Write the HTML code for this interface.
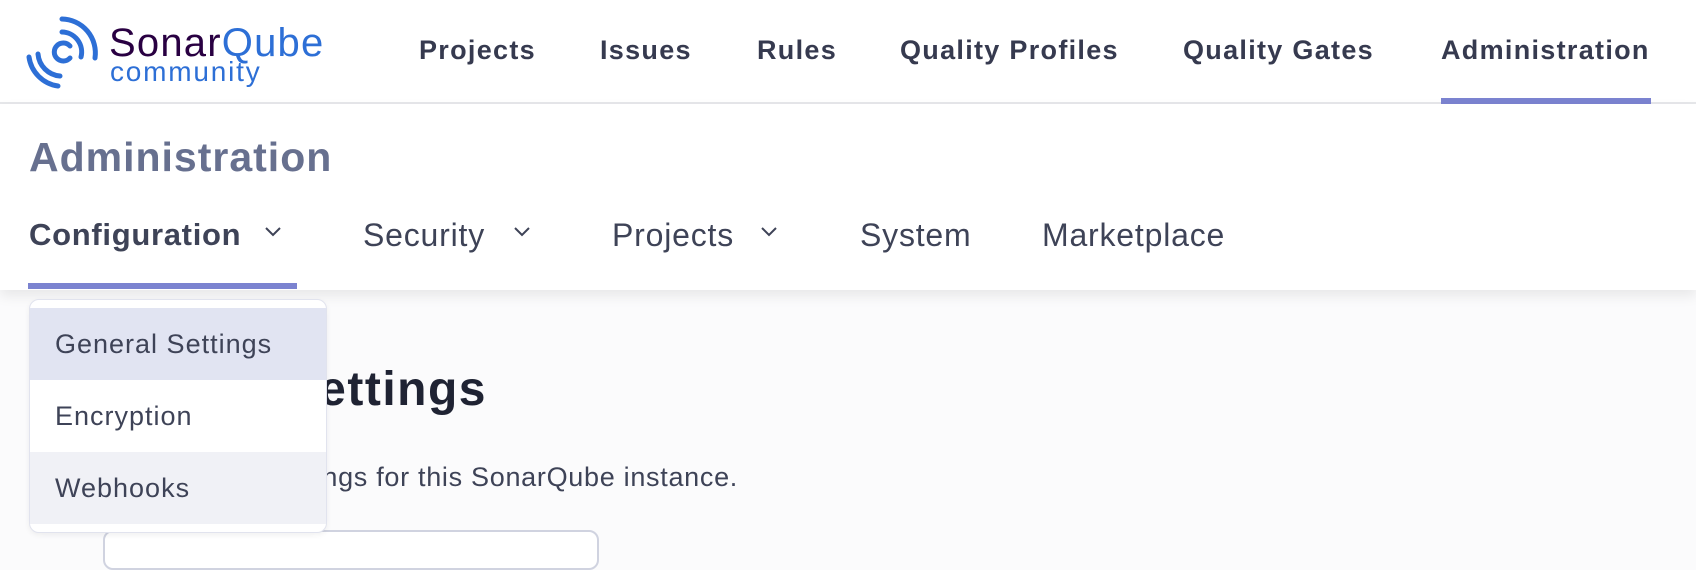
<!DOCTYPE html>
<html><head><meta charset="utf-8"><style>
*{margin:0;padding:0;box-sizing:border-box}
body{width:1696px;height:538px;overflow:hidden;background:#fbfbfc;font-family:"Liberation Sans",sans-serif;position:relative;color:#3e4357}
.top{position:absolute;left:0;top:0;width:1696px;height:104px;background:#fff;border-bottom:2px solid #e6e7ea}
.nav{position:absolute;top:35px;font-weight:bold;font-size:27px;letter-spacing:1.3px;color:#363a4f}
.sub{position:absolute;left:0;top:104px;width:1696px;height:186px;background:#fff;box-shadow:0 6px 12px rgba(0,0,0,0.08)}
.h1{position:absolute;left:29px;top:134px;font-size:41px;font-weight:bold;color:#67708f;letter-spacing:1px}
.tab{position:absolute;top:217px;font-size:32px;letter-spacing:0.8px;color:#3e4357}
.chev{position:absolute;top:226px}
.dd{position:absolute;left:29px;top:299px;width:298px;height:234px;background:#fff;border:1px solid #e1e3ee;border-radius:10px;overflow:hidden;box-shadow:0 2px 6px rgba(0,0,0,0.06)}
.it{position:absolute;left:0;width:298px;height:72px;font-size:27px;letter-spacing:1px;color:#3e4357;padding-left:25px;line-height:72px}
</style></head><body>
<div class="top">
<svg style="position:absolute;left:0;top:0" width="110" height="100" viewBox="0 0 110 100">
<g fill="none" stroke="#2d6fd6" stroke-width="5" stroke-linecap="round">
<path d="M62 32 A20 20 0 0 1 81 57"/>
<path d="M62 19 A34 34 0 0 1 95 58"/>
<path d="M70 46 A9 9 0 1 0 70 58"/>
<path d="M38 54 A24 24 0 0 0 60 76"/>
<path d="M29 57 A34 34 0 0 0 58 86"/>
</g></svg>
<div style="position:absolute;left:109px;top:21px;font-size:40px;color:#290042;letter-spacing:1.2px">Sonar<span style="color:#2d6fd6">Qube</span></div>
<div style="position:absolute;left:110px;top:56px;font-size:28px;color:#2d6fd6;letter-spacing:1.8px">community</div>
<div class="nav" style="left:419px">Projects</div>
<div class="nav" style="left:600px">Issues</div>
<div class="nav" style="left:757px">Rules</div>
<div class="nav" style="left:900px">Quality Profiles</div>
<div class="nav" style="left:1183px">Quality Gates</div>
<div class="nav" style="left:1441px">Administration</div>
<div style="position:absolute;left:1441px;top:98px;width:210px;height:6px;background:#7b83d0"></div>
</div>
<div class="sub"></div>
<div class="h1">Administration</div>
<div class="tab" style="left:29px;font-weight:bold;font-size:31px;letter-spacing:0.7px">Configuration</div>
<div class="tab" style="left:363px">Security</div>
<div class="tab" style="left:612px">Projects</div>
<div class="tab" style="left:860px">System</div>
<div class="tab" style="left:1042px">Marketplace</div>
<svg class="chev" style="left:264px" width="18" height="12"><path d="M2 2l7 7 7-7" fill="none" stroke="#3e4357" stroke-width="2"/></svg>
<svg class="chev" style="left:513px" width="18" height="12"><path d="M2 2l7 7 7-7" fill="none" stroke="#3e4357" stroke-width="2"/></svg>
<svg class="chev" style="left:760px" width="18" height="12"><path d="M2 2l7 7 7-7" fill="none" stroke="#3e4357" stroke-width="2"/></svg>
<div style="position:absolute;left:28px;top:283px;width:269px;height:6px;background:#7b83d0"></div>
<div style="position:absolute;right:1209px;top:362px;font-size:48px;font-weight:bold;color:#1f2333;letter-spacing:1.5px;white-space:nowrap">General Settings</div>
<div style="position:absolute;right:958px;top:462px;font-size:27px;letter-spacing:0.7px;color:#3e4357;white-space:nowrap">Edit global settings for this SonarQube instance.</div>
<div style="position:absolute;left:103px;top:530px;width:496px;height:40px;border:2px solid #d0d3e0;border-radius:10px;background:#fff"></div>
<div class="dd">
<div class="it" style="top:8px;background:#e1e4f2">General Settings</div>
<div class="it" style="top:80px;background:#fff">Encryption</div>
<div class="it" style="top:152px;background:#f0f1f6">Webhooks</div>
</div>
</body></html>
